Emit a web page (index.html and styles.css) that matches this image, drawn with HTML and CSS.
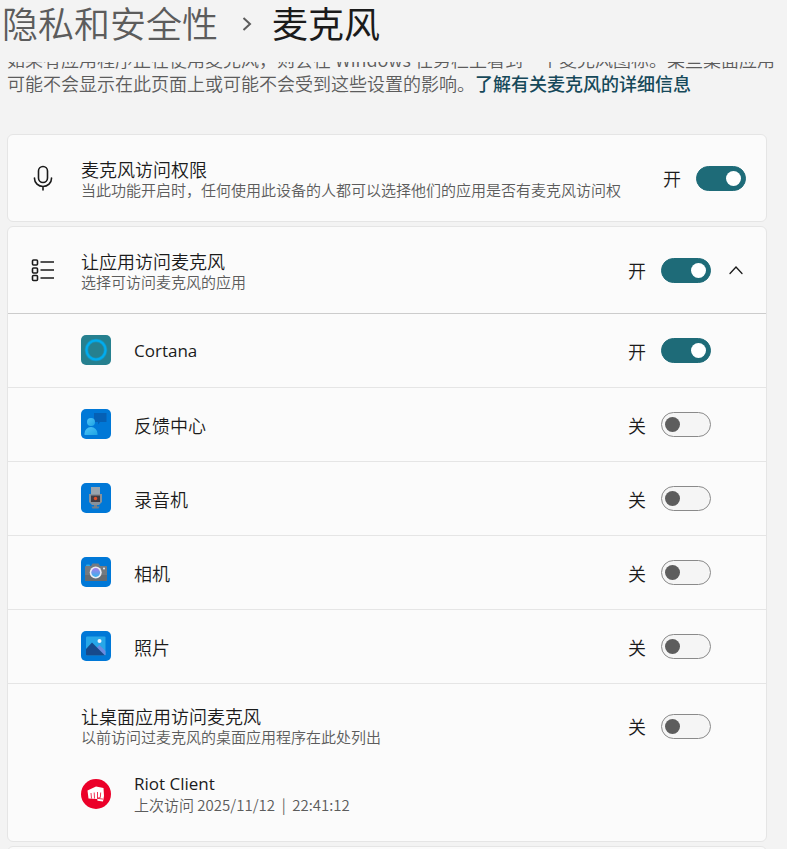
FILE: index.html
```html
<!DOCTYPE html>
<html lang="zh-CN">
<head>
    <meta charset="UTF-8">
    <meta name="viewport" content="width=device-width, initial-scale=1.0">
    <title>麦克风</title>
    <link rel="stylesheet" href="styles.css">
</head>
<body>
    <header class="page-header">
        <a class="crumb" href="#">隐私和安全性</a>
        <svg class="crumb-arrow" width="10" height="16" viewBox="0 0 10 16"><path d="M1.500 2 8 8l-6.500 6" fill="none" stroke="#5c5c5c" stroke-width="2"/></svg>
        <h1 class="crumb-current">麦克风</h1>
    </header>

    <main class="content">
        <p class="intro">如果有应用程序正在使用麦克风，则会在 Windows 任务栏上看到一个麦克风图标。某些桌面应用<br>可能不会显示在此页面上或可能不会受到这些设置的影响。<a class="more-link" href="#">了解有关麦克风的详细信息</a></p>

        <section class="card">
            <div class="row row-main">
                <svg class="row-icon" width="24" height="28" viewBox="0 0 24 28" fill="none" stroke="#1b1b1b" stroke-width="1.600" stroke-linecap="round">
                    <rect x="7.500" y="2.500" width="9" height="16" rx="4.500"/>
                    <path d="M3.500 14v.5a8.500 8 0 0 0 17 0V14M12 22.500V26"/>
                </svg>
                <div class="text">
                    <div class="title">麦克风访问权限</div>
                    <div class="desc">当此功能开启时，任何使用此设备的人都可以选择他们的应用是否有麦克风访问权</div>
                </div>
                <label class="switch">开<input type="checkbox" aria-label="麦克风访问权限" checked></label>
            </div>
        </section>

        <section class="card">
            <div class="row row-main row-expander">
                <svg class="row-icon" width="24" height="24" viewBox="0 0 24 24" fill="none" stroke="#1b1b1b" stroke-width="1.600">
                    <rect x="1.500" y="2" width="5" height="5" rx="1"/>
                    <rect x="1.500" y="10" width="5" height="5" rx="1"/>
                    <rect x="1.500" y="17.500" width="5" height="5" rx="1"/>
                    <path d="M9.500 4H23M9.500 12H23M9.500 20H23"/>
                </svg>
                <div class="text">
                    <div class="title">让应用访问麦克风</div>
                    <div class="desc">选择可访问麦克风的应用</div>
                </div>
                <label class="switch">开<input type="checkbox" aria-label="让应用访问麦克风" checked></label>
                <button class="expand" type="button" aria-label="折叠">
                    <svg width="14" height="10" viewBox="0 0 14 10"><path d="M1 8.500 7 2l6 6.500" fill="none" stroke="#1b1b1b" stroke-width="1.300" stroke-linecap="round"/></svg>
                </button>
            </div>

            <div class="row row-app">
                <svg class="app-icon" width="30" height="30" viewBox="0 0 30 30">
                    <rect width="30" height="30" rx="5" fill="#26808f"/>
                    <circle cx="15" cy="15" r="9.500" fill="none" stroke="#1594bf" stroke-width="3.500"/>
                    <circle cx="15" cy="15" r="9.500" fill="none" stroke="#00adef" stroke-width="2"/>
                </svg>
                <div class="text title latin">Cortana</div>
                <label class="switch">开<input type="checkbox" aria-label="Cortana" checked></label>
            </div>

            <div class="row row-app">
                <svg class="app-icon" width="30" height="30" viewBox="0 0 30 30">
                    <defs><linearGradient id="person" x1="0" y1="0" x2="1" y2="1"><stop offset="0" stop-color="#4fc3f7"/><stop offset="1" stop-color="#1ea5e4"/></linearGradient></defs>
                    <rect width="30" height="30" rx="5" fill="#0078d7"/>
                    <path d="M13 4h12.500v9H19l-2 2.500V13h-4z" fill="#0560b5"/>
                    <circle cx="10" cy="13" r="4" fill="url(#person)"/>
                    <path d="M3.500 26v-1.500a6.500 6.500 0 0 1 13 0V26z" fill="url(#person)"/>
                </svg>
                <div class="text title">反馈中心</div>
                <label class="switch">关<input type="checkbox" aria-label="反馈中心"></label>
            </div>

            <div class="row row-app">
                <svg class="app-icon" width="30" height="30" viewBox="0 0 30 30">
                    <rect width="30" height="30" rx="5" fill="#0078d7"/>
                    <path d="M10 4h9v8h-9z" fill="#98a4ae"/>
                    <path d="M8 11h13v8l-3 3h-7l-3-3z" fill="#87919b"/>
                    <rect x="10" y="12.500" width="9" height="6.500" fill="#423c42"/>
                    <circle cx="14.500" cy="15.500" r="1.700" fill="#e2502a"/>
                    <path d="M13 22h3v1.500h-3zM10.500 23.500h8l-1 2h-6z" fill="#75808a"/>
                </svg>
                <div class="text title">录音机</div>
                <label class="switch">关<input type="checkbox" aria-label="录音机"></label>
            </div>

            <div class="row row-app">
                <svg class="app-icon" width="30" height="30" viewBox="0 0 30 30">
                    <defs><linearGradient id="lens" x1="0" y1="0" x2="0" y2="1"><stop offset="0" stop-color="#a77de8"/><stop offset="1" stop-color="#36b3ee"/></linearGradient></defs>
                    <rect width="30" height="30" rx="5" fill="#0078d7"/>
                    <rect x="5" y="7.500" width="4" height="3" rx="1" fill="#2aa8e8"/>
                    <path d="M4 10q0-1 1-1h5l1.500-2.500h6L19 9h6q1 0 1 1v13q0 1-1 1H5q-1 0-1-1z" fill="#747a80"/>
                    <path d="M4 18h22v5q0 1-1 1H5q-1 0-1-1z" fill="#666c72"/>
                    <circle cx="14.700" cy="15.500" r="6" fill="#e9edf4"/>
                    <circle cx="14.700" cy="15.500" r="4.400" fill="url(#lens)"/>
                    <circle cx="23" cy="11.500" r="1" fill="#e9edf4"/>
                </svg>
                <div class="text title">相机</div>
                <label class="switch">关<input type="checkbox" aria-label="相机"></label>
            </div>

            <div class="row row-app">
                <svg class="app-icon" width="30" height="30" viewBox="0 0 30 30">
                    <rect width="30" height="30" rx="5" fill="#0078d7"/>
                    <rect x="5" y="5.500" width="19.500" height="19" rx="1" fill="#27a7e8"/>
                    <path d="M14 18.500 18.500 14l6 6v4h-7z" fill="#6b8be0"/>
                    <path d="M5 18l6-6.500 13 13H6q-1 0-1-1z" fill="#174a8c"/>
                    <circle cx="18.500" cy="10" r="2" fill="#f5f9ff"/>
                </svg>
                <div class="text title">照片</div>
                <label class="switch">关<input type="checkbox" aria-label="照片"></label>
            </div>

            <div class="desktop">
                <div class="row">
                    <div class="text">
                        <div class="title">让桌面应用访问麦克风</div>
                        <div class="desc">以前访问过麦克风的桌面应用程序在此处列出</div>
                    </div>
                    <label class="switch">关<input type="checkbox" aria-label="让桌面应用访问麦克风"></label>
                </div>
                <div class="row row-client">
                    <svg class="app-icon" width="30" height="30" viewBox="0 0 30 30">
                        <circle cx="15" cy="15" r="15" fill="#eb0029"/>
                        <path d="M6.500 11.500 15 7.500l7.500 1.500.5 8-1 5.500-5.500-.8-.3-1.700-8.700-.5z" fill="#fff"/>
                        <path d="M10 14l.5 5.500M13.200 13.500l.3 6M16.500 13v6.500M19.700 13.500l-.4 5-3 .8 5.700.8" fill="none" stroke="#eb0029" stroke-width=".8"/>
                    </svg>
                    <div class="text">
                        <div class="title latin">Riot Client</div>
                        <div class="desc">上次访问 2025/11/12&nbsp; |&nbsp; 22:41:12</div>
                    </div>
                </div>
            </div>
        </section>

        <section class="card card-next"></section>
    </main>
</body>
</html>
```
FILE: styles.css
```css
* {
    box-sizing: border-box;
}
body {
    margin: 0;
    height: 100vh;
    display: flex;
    flex-direction: column;
    overflow: hidden;
    background-color: #f3f3f3;
    color: #1b1b1b;
    font-family: "Noto Sans CJK SC", "Open Sans", sans-serif;
    font-size: 18px;
    font-weight: 350;
}
.page-header {
    flex: none;
    display: flex;
    align-items: center;
    height: 62px;
    padding: 0 2px 18px;
    font-size: 36px;
    line-height: 44px;
}
.crumb {
    color: #5c5c5c;
    text-decoration: none;
}
.crumb-arrow {
    margin: 4px 20px 0 24px;
}
.crumb-current {
    margin: 0;
    font-size: 36px;
    font-weight: 400;
}
.content {
    flex: 1;
    min-height: 0;
    overflow: hidden;
    padding: 0 20px 0 7px;
}
.intro {
    margin: -15px 0 39px;
    color: #5c5c5c;
    line-height: 24px;
    white-space: nowrap;
}
.more-link {
    color: #16495a;
    font-weight: 500;
    text-decoration: none;
}
.card {
    margin-bottom: 4px;
    background-color: #fbfbfb;
    border: 1px solid #e5e5e5;
    border-radius: 6px;
}
.card-next {
    height: 88px;
}
.row {
    display: flex;
    align-items: center;
}
.row-main {
    height: 86px;
    padding: 0 20px 0 23px;
}
.row-main .text {
    padding-top: 2px;
}
.row-icon {
    flex: none;
    margin-right: 26px;
}
.row-expander {
    padding-right: 23px;
}
.row-app {
    height: 74px;
    padding: 0 55px 0 73px;
    border-top: 1px solid #e5e5e5;
}
.row-expander + .row-app {
    border-top-color: #cccccc;
}
.app-icon {
    flex: none;
    margin-right: 23px;
}
.row-app .app-icon {
    margin-bottom: 2px;
}
.text {
    flex: 1;
    min-width: 0;
    white-space: nowrap;
}
.title {
    line-height: 22px;
}
.latin {
    font-family: "Open Sans", sans-serif;
    font-size: 17px;
    font-weight: 400;
}
.desc {
    color: #5c5c5c;
    font-size: 15px;
    line-height: 20px;
}
.switch {
    display: flex;
    align-items: center;
    gap: 15px;
}
.switch input {
    appearance: none;
    display: flex;
    align-items: center;
    width: 50px;
    height: 25px;
    margin: 0;
    padding: 0 4px 0 3px;
    background-color: #f5f5f5;
    border: 1px solid #8a8a8a;
    border-radius: 13px;
}
.switch input::before {
    content: "";
    width: 15px;
    height: 15px;
    border-radius: 50%;
    background-color: #5d5d5d;
}
.switch input:checked {
    justify-content: flex-end;
    background-color: #1e6b78;
    border-color: #1e6b78;
}
.switch input:checked::before {
    background-color: #ffffff;
}
.expand {
    display: flex;
    margin-left: 18px;
    padding: 0;
    background: none;
    border: none;
}
.desktop {
    padding: 21px 55px 26px 73px;
    border-top: 1px solid #e5e5e5;
}
.row-client {
    margin-top: 26px;
}
```
